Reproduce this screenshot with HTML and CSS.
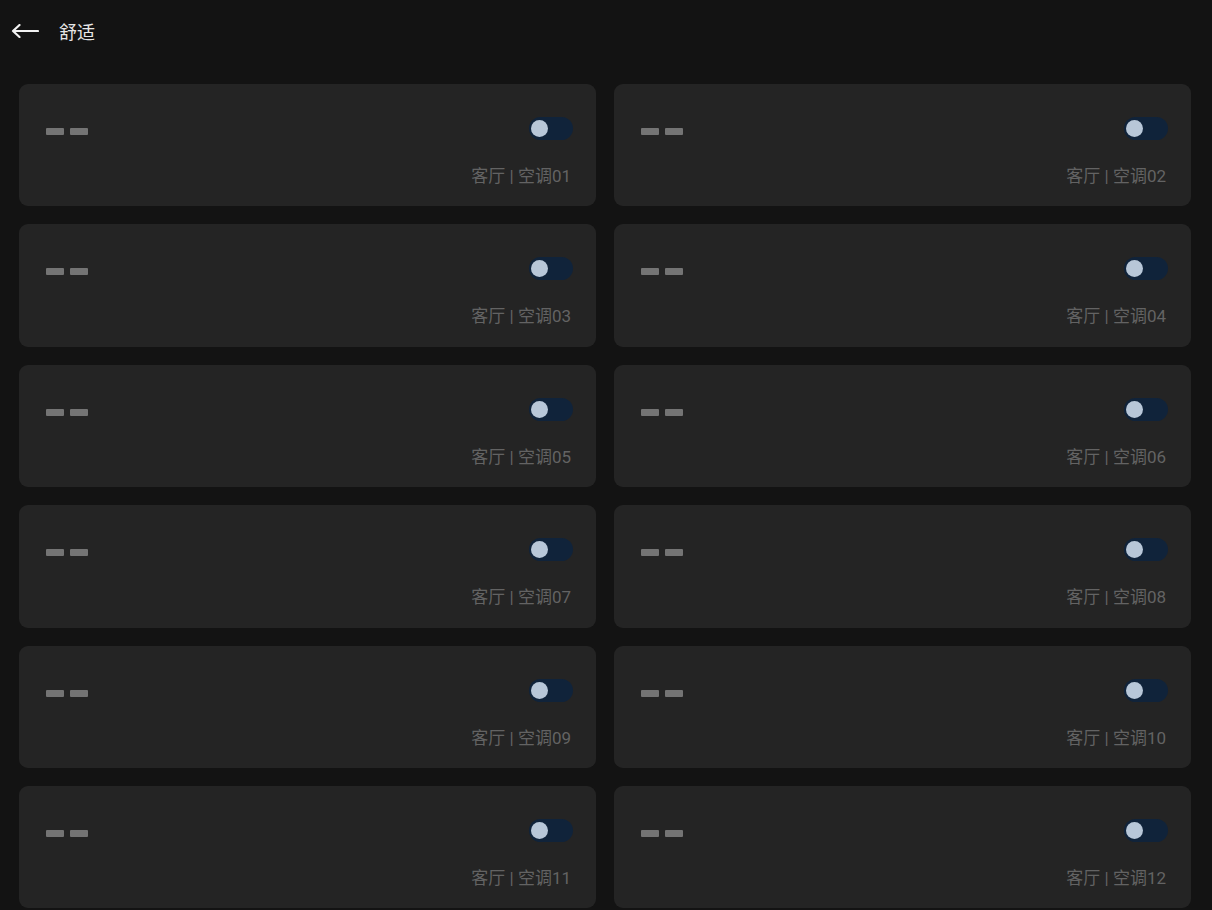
FILE: index.html
```html
<!DOCTYPE html>
<html lang="zh-CN">
<head>
    <meta charset="UTF-8">
    <meta name="viewport" content="width=device-width, initial-scale=1.0">
    <title>舒适</title>
    <link rel="stylesheet" href="styles.css">
</head>
<body>
    <div class="header">
        <svg class="back-icon" width="28" height="14" viewBox="0 0 28 14">
            <path d="M2 7 H27 M8.5 1 L2 7 L8.5 13" fill="none" stroke="#f2f2f2" stroke-width="2.2" stroke-linecap="round" stroke-linejoin="round"/>
        </svg>
        <span class="title">舒适</span>
    </div>

    <div class="card-grid" id="cardGrid">
        <!-- cards are added by the script below -->
    </div>

    <script>
        const grid = document.getElementById('cardGrid');

        for (let i = 1; i <= 12; i++) {
            const num = i < 10 ? '0' + i : String(i);
            const card = document.createElement('div');
            card.className = 'card';
            card.innerHTML =
                '<div class="card-top">' +
                    '<div class="dashes"><span></span><span></span></div>' +
                    '<div class="toggle"><span class="knob"></span></div>' +
                '</div>' +
                '<div class="card-label">客厅 | 空调' + num + '</div>';
            grid.appendChild(card);
        }
    </script>
</body>
</html>
```

FILE: styles.css
```css
body {
    margin: 0;
    background-color: #131313;
    font-family: "Noto Sans CJK SC", "Noto Sans", sans-serif;
    color: #e8e8e8;
}
.header {
    height: 62px;
    display: flex;
    align-items: center;
    padding-left: 11px;
}
.back-icon {
    display: block;
}
.title {
    margin-left: 20px;
    font-size: 18px;
    color: #e6e6e6;
}
.card-grid {
    display: grid;
    grid-template-columns: 577px 577px;
    gap: 18px;
    padding: 22px 21px 0 19px;
}
.card {
    height: 122.4px;
    box-sizing: border-box;
    background-color: #242424;
    border-radius: 9px;
    padding: 33px 23px 0 27px;
}
.card-top {
    display: flex;
    justify-content: space-between;
    align-items: center;
    height: 23px;
}
.dashes {
    display: flex;
    gap: 6px;
    margin-top: 6px;
}
.dashes span {
    width: 18px;
    height: 7px;
    background-color: #747474;
    border-radius: 1px;
}
.toggle {
    width: 44px;
    height: 23px;
    border-radius: 12px;
    background-color: #10233a;
    display: flex;
    align-items: center;
    padding-left: 2px;
    box-sizing: border-box;
}
.knob {
    width: 17px;
    height: 17px;
    border-radius: 50%;
    background-color: #b8c7d8;
}
.card-label {
    margin-top: 24px;
    text-align: right;
    padding-right: 2px;
    font-family: Roboto, "Noto Sans CJK SC", sans-serif;
    font-size: 17px;
    line-height: 24px;
    color: #636363;
}
```
